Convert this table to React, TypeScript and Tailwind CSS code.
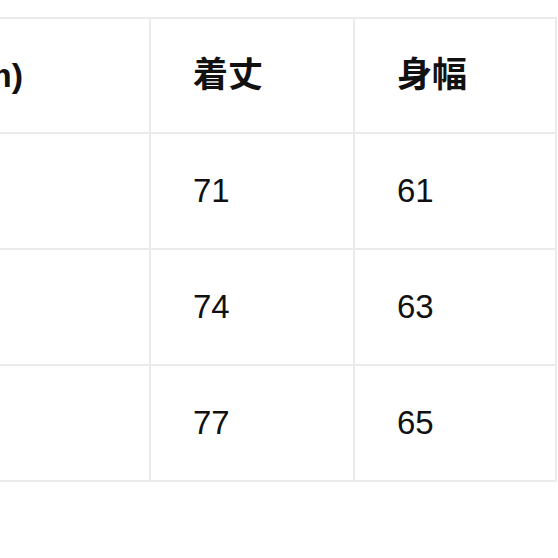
const rows = [
  { length: '71', width: '61' },
  { length: '74', width: '63' },
  { length: '77', width: '65' },
]

const font = { fontFamily: '"Liberation Sans", "Noto Sans CJK JP", sans-serif' }

export default function App() {
  return (
    <div className="w-[558px] h-[558px] bg-white overflow-hidden text-[#111]" style={font}>
      <div className="mt-[17px] w-[557px] border-t-2 border-[#ebebeb] grid grid-cols-[151px_204px_202px]">
        {/* header, first column is cut by the left edge */}
        <div className="h-[115px] border-r-2 border-b-2 border-[#ebebeb] flex items-center justify-end overflow-hidden pr-[126px] whitespace-nowrap">
          <span className="text-[34px] font-bold">サイズ(cm)</span>
        </div>
        <div className="h-[115px] border-r-2 border-b-2 border-[#ebebeb] flex items-center pl-[42px]">
          <span className="text-[35px] font-bold">着丈</span>
        </div>
        <div className="h-[115px] border-r-2 border-b-2 border-[#ebebeb] flex items-center pl-[42px]">
          <span className="text-[35px] font-bold">身幅</span>
        </div>

        {rows.map((r) => (
          <Row key={r.length} {...r} />
        ))}
      </div>
    </div>
  )
}

function Row({ length, width }: { length: string; width: string }) {
  return (
    <>
      <div className="h-[116px] border-r-2 border-b-2 border-[#ebebeb]" />
      <div className="h-[116px] border-r-2 border-b-2 border-[#ebebeb] flex items-center pl-[42px]">
        <span className="text-[33px]">{length}</span>
      </div>
      <div className="h-[116px] border-r-2 border-b-2 border-[#ebebeb] flex items-center pl-[42px]">
        <span className="text-[33px]">{width}</span>
      </div>
    </>
  )
}
